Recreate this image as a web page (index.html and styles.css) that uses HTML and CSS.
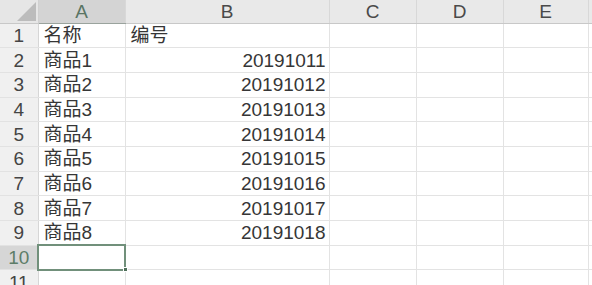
FILE: index.html
```html
<!DOCTYPE html>
<html lang="zh-CN">
<head>
  <meta charset="UTF-8">
  <title>Sheet1</title>
  <link rel="stylesheet" href="styles.css">
</head>
<body>
  <table class="sheet">
    <colgroup>
      <col class="col-num">
      <col class="col-a">
      <col class="col-b">
      <col class="col-c">
      <col class="col-d">
      <col class="col-e">
      <col class="col-f">
    </colgroup>
    <tr class="head">
      <th class="corner"><span class="tri"></span></th>
      <th class="active">A</th>
      <th>B</th>
      <th>C</th>
      <th>D</th>
      <th>E</th>
      <th></th>
    </tr>
    <tr><th class="num">1</th><td>名称</td><td>编号</td><td></td><td></td><td></td><td></td></tr>
    <tr><th class="num">2</th><td>商品1</td><td class="n">20191011</td><td></td><td></td><td></td><td></td></tr>
    <tr><th class="num">3</th><td>商品2</td><td class="n">20191012</td><td></td><td></td><td></td><td></td></tr>
    <tr><th class="num">4</th><td>商品3</td><td class="n">20191013</td><td></td><td></td><td></td><td></td></tr>
    <tr><th class="num">5</th><td>商品4</td><td class="n">20191014</td><td></td><td></td><td></td><td></td></tr>
    <tr><th class="num">6</th><td>商品5</td><td class="n">20191015</td><td></td><td></td><td></td><td></td></tr>
    <tr><th class="num">7</th><td>商品6</td><td class="n">20191016</td><td></td><td></td><td></td><td></td></tr>
    <tr><th class="num">8</th><td>商品7</td><td class="n">20191017</td><td></td><td></td><td></td><td></td></tr>
    <tr><th class="num">9</th><td>商品8</td><td class="n">20191018</td><td></td><td></td><td></td><td></td></tr>
    <tr><th class="num active">10</th><td class="selected"><span class="handle"></span></td><td></td><td></td><td></td><td></td><td></td></tr>
    <tr><th class="num">11</th><td></td><td></td><td></td><td></td><td></td><td></td></tr>
  </table>
</body>
</html>
```

FILE: styles.css
```css
* {
  margin: 0;
  padding: 0;
  box-sizing: border-box;
}

body {
  background: #ffffff;
  font-family: "Liberation Sans", "Noto Sans CJK SC", sans-serif;
  color: #363636;
  overflow: hidden;
}

.sheet {
  border-collapse: collapse;
  table-layout: fixed;
  width: 600px;
  font-size: 19px;
}

.col-num { width: 38px; }
.col-a { width: 87px; }
.col-b { width: 204px; }
.col-c { width: 87px; }
.col-d { width: 87px; }
.col-e { width: 85px; }
.col-f { width: 12px; }

.sheet tr {
  height: 24.7px;
}

.sheet tr.head {
  height: 23px;
}

.sheet td {
  border-right: 1px solid #e3e3e3;
  border-bottom: 1px solid #e3e3e3;
  padding: 0 3px 0 5px;
  white-space: nowrap;
  line-height: 1;
  vertical-align: middle;
}

.sheet td.n {
  text-align: right;
}

/* column headers */
.head th {
  background: #e9e9e9;
  color: #4a4a4a;
  font-weight: normal;
  font-size: 19px;
  border-right: 1px solid #d8d8d8;
  border-bottom: 1px solid #c8c8c8;
  line-height: 1;
}

.head th.active {
  background: #d4d4d4;
  color: #5a7564;
  border-bottom: 1px solid #9aa39d;
}

.head th.corner {
  position: relative;
  background: #e6e6e6;
  border-right: 1px solid #d0d0d0;
}

.tri {
  position: absolute;
  right: 2px;
  bottom: 2px;
  width: 0;
  height: 0;
  border-left: 19px solid transparent;
  border-bottom: 19px solid #bcbcbc;
}

/* row headers */
th.num {
  background: #f0f0f0;
  color: #444;
  font-weight: normal;
  font-size: 19px;
  border-right: 1px solid #d6d6d6;
  border-bottom: 1px solid #e2e2e2;
  line-height: 1;
}

th.num.active {
  background: #d6d6d6;
  color: #5d7d68;
}

/* active cell */
td.selected {
  position: relative;
  outline: 2px solid #71907b;
  outline-offset: -1px;
}

.handle {
  position: absolute;
  right: -3px;
  bottom: -3px;
  width: 5px;
  height: 5px;
  background: #4f6f5a;
  border: 1px solid #ffffff;
}
```
